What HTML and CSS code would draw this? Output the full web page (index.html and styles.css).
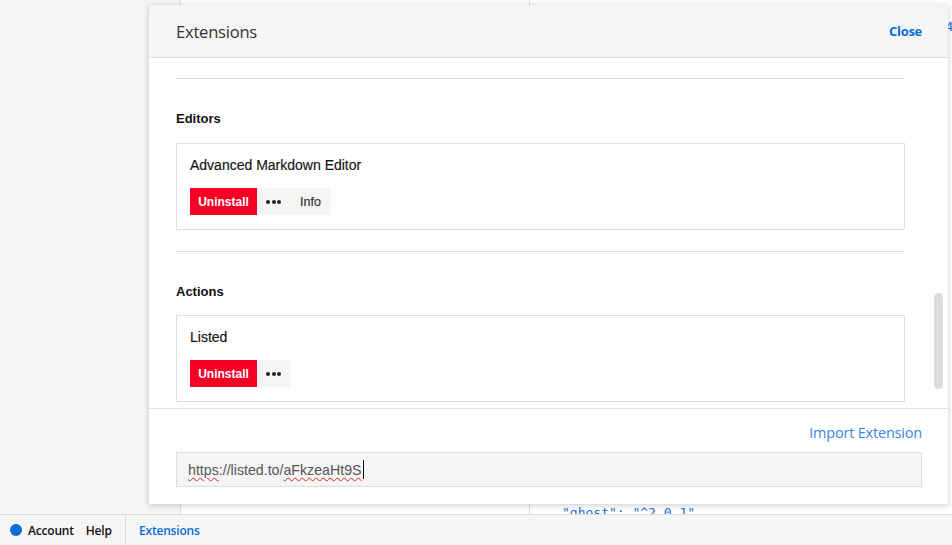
FILE: index.html
```html
<!DOCTYPE html>
<html>
<head>
<meta charset="utf-8">
<link rel="stylesheet" href="styles.css">
</head>
<body>
<div class="app">
  <div class="panes">
    <div class="pane tags"></div>
    <div class="pane notes"></div>
    <div class="pane editor">
      <div class="code"><span class="c-top">&nbsp;&nbsp;&nbsp;&nbsp;&nbsp;&nbsp;&nbsp;&nbsp;&nbsp;&nbsp;&nbsp;&nbsp;&nbsp;&nbsp;&nbsp;&nbsp;&nbsp;&nbsp;&nbsp;&nbsp;&nbsp;&nbsp;&nbsp;&nbsp;&nbsp;&nbsp;&nbsp;&nbsp;&nbsp;&nbsp;&nbsp;&nbsp;&nbsp;&nbsp;&nbsp;&nbsp;&nbsp;&nbsp;&nbsp;&nbsp;&nbsp;&nbsp;&nbsp;&nbsp;&nbsp;&nbsp;&nbsp;&nbsp;&nbsp;4</span></div>
      <div class="code code-low">"ghost": "^2.0.1"</div>
    </div>
  </div>
  <div class="footer">
    <div class="foot-left">
      <span class="dot"></span>
      <span class="foot-link">Account</span>
      <span class="foot-link">Help</span>
    </div>
    <div class="foot-ext">Extensions</div>
  </div>
</div>

<div class="modal">
  <div class="modal-head">
    <div class="modal-title">Extensions</div>
    <div class="modal-close">Close</div>
  </div>
  <div class="modal-body">
    <div class="scroll">
      <hr class="rule">
      <div class="section">
        <div class="section-title">Editors</div>
        <div class="card">
          <div class="card-title">Advanced Markdown Editor</div>
          <div class="btns">
            <span class="btn danger">Uninstall</span>
            <span class="btn-group"><span class="btn more"><i></i><i></i><i></i></span><span class="btn info">Info</span></span>
          </div>
        </div>
      </div>
      <hr class="rule">
      <div class="section">
        <div class="section-title">Actions</div>
        <div class="card">
          <div class="card-title">Listed</div>
          <div class="btns">
            <span class="btn danger">Uninstall</span>
            <span class="btn-group"><span class="btn more"><i></i><i></i><i></i></span></span>
          </div>
        </div>
      </div>
    </div>
    <div class="scrollbar"></div>
  </div>
  <div class="modal-foot">
    <div class="import">Import Extension</div>
    <div class="input"><span class="sp">https</span>://listed.to/<span class="sp">aFkzeaHt9S</span><span class="caret"></span></div>
  </div>
</div>
</body>
</html>
```
FILE: styles.css
```css
html, body {
  margin: 0;
  padding: 0;
  width: 952px;
  height: 545px;
  overflow: hidden;
  background: #ffffff;
  font-family: "Open Sans", "Noto Sans", sans-serif;
}

.app {
  display: flex;
  flex-direction: column;
  height: 545px;
}

.panes {
  display: flex;
  height: 514px;
}

.pane {
  height: 514px;
  overflow: hidden;
}

.tags {
  width: 180px;
  background: #f5f5f5;
  border-right: 1px solid #dedede;
}

.notes {
  width: 348px;
  background: #ffffff;
  border-right: 1px solid #dedede;
}

.editor {
  flex: 1;
  background: #ffffff;
  padding-left: 32px;
}

.code {
  font-family: "DejaVu Sans Mono", "Liberation Mono", monospace;
  font-size: 13px;
  line-height: 18px;
  color: #1f6fd8;
  white-space: pre;
}

.c-top {
  display: block;
  padding-top: 18px;
}

.code-low {
  margin-top: 468px;
}

.footer {
  height: 30px;
  border-top: 1px solid #dcdcdc;
  background: #f5f5f5;
  display: flex;
  align-items: stretch;
  font-size: 12px;
  font-weight: 600;
}

.foot-left {
  display: flex;
  align-items: center;
  gap: 12px;
  padding-left: 10px;
  padding-right: 12px;
  border-right: 1px solid #dcdcdc;
  width: 103px;
}

.dot {
  width: 12px;
  height: 12px;
  border-radius: 50%;
  background: #086dd6;
  margin-right: -6px;
  flex: none;
}

.foot-link {
  color: #111;
  letter-spacing: -0.2px;
}

.foot-ext {
  display: flex;
  align-items: center;
  padding-left: 13px;
  color: #086dd6;
  letter-spacing: -0.2px;
}

/* Modal overlay */
.modal {
  position: absolute;
  left: 149px;
  top: 5px;
  width: 799px;
  height: 499px;
  background: #ffffff;
  box-shadow: 0 1px 6px rgba(0, 0, 0, 0.22);
  display: flex;
  flex-direction: column;
}

.modal-head {
  height: 52px;
  background: #f5f5f5;
  border-bottom: 1px solid #dedede;
  display: flex;
  align-items: center;
  justify-content: space-between;
  padding: 0 26px 0 27px;
  flex: none;
}

.modal-title {
  font-size: 16.5px;
  color: #333;
  letter-spacing: -0.2px;
}

.modal-close {
  font-size: 13px;
  font-weight: 700;
  color: #086dd6;
  letter-spacing: -0.3px;
}

.modal-body {
  height: 350px;
  flex: none;
  overflow: hidden;
  position: relative;
}

.scroll {
  padding: 20px 43px 0 27px;
}

.rule {
  border: 0;
  border-top: 1px solid #dedede;
  margin: 0;
}

.section {
  padding: 25px 0 21px;
}

.section-title {
  font-family: "Liberation Sans", Arial, sans-serif;
  font-size: 13px;
  font-weight: 700;
  color: #111;
  line-height: 16px;
  margin-top: 7px;
  margin-bottom: 16px;
}

.section + .rule + .section .section-title {
  margin-bottom: 15px;
}

.card {
  border: 1px solid #dedede;
  padding: 13px 13px 14px;
}

.card-title {
  font-family: "Liberation Sans", Arial, sans-serif;
  font-size: 14px;
  color: #111;
  line-height: 16px;
  margin-bottom: 15px;
  -webkit-text-stroke: 0.15px #111;
}

.btns {
  display: flex;
  height: 27px;
}

.btn {
  display: flex;
  align-items: center;
  justify-content: center;
  font-family: "Liberation Sans", Arial, sans-serif;
  font-size: 12px;
  height: 27px;
}

.danger {
  background: #f80025;
  color: #fff;
  font-weight: 700;
  width: 67px;
}

.btn-group {
  display: flex;
  background: #f5f5f5;
}

.more {
  width: 33px;
  gap: 1.5px;
}

.more i {
  display: block;
  width: 4px;
  height: 4px;
  border-radius: 50%;
  background: #222;
}

.info {
  width: 41px;
  color: #333;
  font-size: 12.5px;
  -webkit-text-stroke: 0.2px #333;
}

.scrollbar {
  position: absolute;
  right: 5px;
  top: 235px;
  width: 9px;
  height: 96px;
  border-radius: 5px;
  background: #dcdcdc;
}

.modal-foot {
  flex: 1;
  border-top: 1px solid #dedede;
  padding: 13px 26px 0 27px;
  display: flex;
  flex-direction: column;
}

.import {
  align-self: flex-end;
  font-size: 14.5px;
  color: #3a86dc;
  line-height: 22px;
  letter-spacing: -0.2px;
}

.input {
  margin-top: 8px;
  height: 33px;
  background: #f5f5f5;
  border: 1px solid #dedede;
  display: flex;
  align-items: center;
  padding-left: 11px;
  font-family: "Liberation Sans", Arial, sans-serif;
  font-size: 14.2px;
  color: #555;
}

.sp {
  text-decoration: underline wavy #e02020;
  text-decoration-thickness: 1px;
  text-underline-offset: 2px;
}

.caret {
  display: inline-block;
  width: 1px;
  height: 19px;
  background: #111;
  margin-left: 1px;
}
```
